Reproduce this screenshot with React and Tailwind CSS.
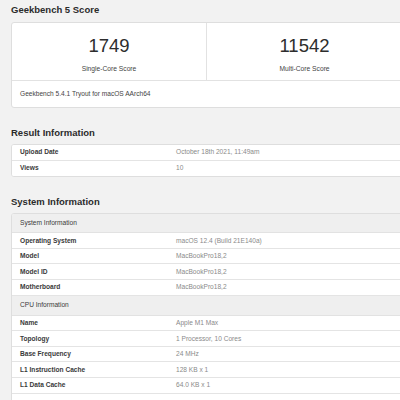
import React from "react";

const font = { fontFamily: '"Liberation Sans", Arial, Helvetica, sans-serif' };

function Row({ label, value, last }) {
  return (
    <div className={`grid grid-cols-[164px_1fr] h-[15.6px] items-center bg-white ${last ? "" : "border-b border-[#e4e4e4]"}`}>
      <div className="pl-[8px] text-[6.6px] font-bold text-[#3a3a3a] whitespace-nowrap">{label}</div>
      <div className="text-[6.6px] text-[#8a8a8a] whitespace-nowrap">{value}</div>
    </div>
  );
}

function HeaderRow({ title, h }) {
  return (
    <div className={`${h} flex items-center pl-[8px] bg-[#efefef] border-b border-[#e2e2e2] text-[6.6px] text-[#3a3a3a]`}>
      {title}
    </div>
  );
}

export default function App() {
  return (
    <div style={font} className="w-[400px] h-[400px] overflow-hidden bg-[#f2f2f2]">
      <div className="pl-[11px] pt-[4px] w-[403px]">
        <h2 className="h-[12px] leading-[12px] text-[9.5px] font-bold text-[#2b2b2b]">Geekbench 5 Score</h2>
        <div className="mt-[6px] bg-white border border-[#dedede] rounded-[3px]">
          <div className="grid grid-cols-2 h-[58px] border-b border-[#e2e2e2]">
            <div className="flex flex-col items-center border-r border-[#e2e2e2] pt-[13px]">
              <div className="text-[18.5px] leading-[20px] text-[#2d2d2d]">1749</div>
              <div className="mt-[9px] text-[6.7px] leading-[8px] text-[#444]">Single-Core Score</div>
            </div>
            <div className="flex flex-col items-center pt-[13px]">
              <div className="text-[18.5px] leading-[20px] text-[#2d2d2d]">11542</div>
              <div className="mt-[9px] text-[6.7px] leading-[8px] text-[#444]">Multi-Core Score</div>
            </div>
          </div>
          <div className="h-[26px] flex items-center pl-[8px] text-[6.6px] text-[#444]">
            Geekbench 5.4.1 Tryout for macOS AArch64
          </div>
        </div>

        <h2 className="mt-[19px] h-[12px] leading-[12px] text-[9.5px] font-bold text-[#2b2b2b]">Result Information</h2>
        <div className="mt-[5px] bg-white border border-[#dedede] rounded-[3px] overflow-hidden">
          <Row label="Upload Date" value="October 18th 2021, 11:49am" />
          <Row label="Views" value="10" last />
        </div>

        <h2 className="mt-[19px] h-[12px] leading-[12px] text-[9.5px] font-bold text-[#2b2b2b]">System Information</h2>
        <div className="mt-[5px] bg-white border border-[#dedede] rounded-[3px] overflow-hidden">
          <HeaderRow title="System Information" h="h-[19px]" />
          <Row label="Operating System" value="macOS 12.4 (Build 21E140a)" />
          <Row label="Model" value="MacBookPro18,2" />
          <Row label="Model ID" value="MacBookPro18,2" />
          <Row label="Motherboard" value="MacBookPro18,2" />
          <HeaderRow title="CPU Information" h="h-[20px]" />
          <Row label="Name" value="Apple M1 Max" />
          <Row label="Topology" value="1 Processor, 10 Cores" />
          <Row label="Base Frequency" value="24 MHz" />
          <Row label="L1 Instruction Cache" value="128 KB x 1" />
          <Row label="L1 Data Cache" value="64.0 KB x 1" />
          <div className="h-[16px] bg-white" />
        </div>
      </div>
    </div>
  );
}
